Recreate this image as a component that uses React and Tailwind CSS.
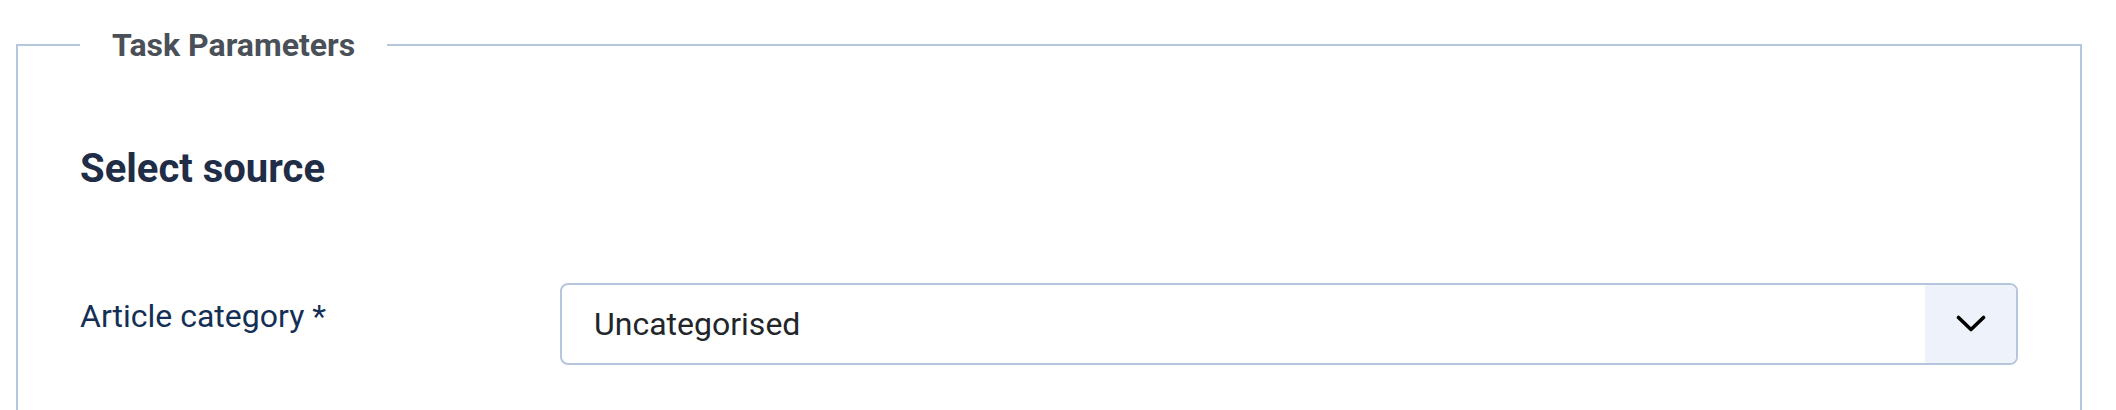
import React from 'react';

const ChevronDown = () => (
    <svg width="30" height="18" viewBox="0 0 30 18" fill="none" stroke="#000" strokeWidth="3.6" strokeLinecap="round" strokeLinejoin="round">
        <path d="M2.5 2.5 L15 14.5 L27.5 2.5" />
    </svg>
);

const App = () => {
    return (
        <div className="min-h-screen bg-white font-['Roboto',sans-serif] pt-[21px]">
            <fieldset className="ml-[16px] mr-[34px] border-2 border-[#b6c6dd] px-[62px] pb-[80px]">
                <legend className="px-[32px] text-[32px] leading-[48px] font-bold text-[#495057]">
                    Task Parameters
                </legend>

                <h3 className="mt-[76px] text-[40px] leading-[48px] font-bold text-[#1f2d47]">
                    Select source
                </h3>

                <div className="mt-[90px] flex items-start">
                    <label className="w-[480px] shrink-0 pt-[9px] text-[32px] leading-[48px] text-[#142f55]">
                        Article category *
                    </label>
                    <div className="flex h-[82px] flex-1 overflow-hidden rounded-[8px] border-2 border-[#b6c6dd] bg-white">
                        <div className="flex flex-1 items-center pl-[32px] text-[32px] leading-[48px] text-[#22262a]">
                            Uncategorised
                        </div>
                        <div className="flex w-[91px] items-center justify-center bg-[#eef3fb]">
                            <ChevronDown />
                        </div>
                    </div>
                </div>
            </fieldset>
        </div>
    );
};

export default App;
